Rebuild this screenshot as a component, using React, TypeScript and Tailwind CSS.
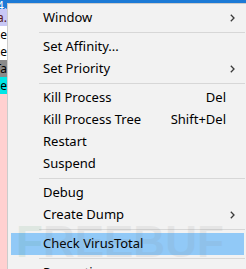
import React from "react";

const rows = [
  { bg: "bg-[#1c7ad6]", h: "h-[9px]", text: "4.", color: "text-white", align: "items-start" },
  { bg: "bg-[#c8c8f6]", h: "h-[17px]", text: "a.", color: "text-[#5a1a1a]", align: "items-center" },
  { bg: "bg-white", h: "h-[17px]", text: "ce", color: "text-black", align: "items-center" },
  { bg: "bg-white", h: "h-[17px]", text: "ce", color: "text-black", align: "items-center" },
  { bg: "bg-[#8a8a8a]", h: "h-[17px]", text: "Ta", color: "text-black", align: "items-center" },
  { bg: "bg-[#00e6e6]", h: "h-[17px]", text: "ce", color: "text-black", align: "items-center" },
];

function Chevron() {
  return (
    <svg width="5" height="8" viewBox="0 0 5 8" className="block">
      <path d="M0.8 0.8 L4 4 L0.8 7.2" fill="none" stroke="#3a3a3a" strokeWidth="1.3" />
    </svg>
  );
}

type Item = { label: string; shortcut?: string; sub?: boolean; active?: boolean } | "sep";

const items: Item[] = [
  { label: "Window", sub: true },
  "sep",
  { label: "Set Affinity..." },
  { label: "Set Priority", sub: true },
  "sep",
  { label: "Kill Process", shortcut: "Del" },
  { label: "Kill Process Tree", shortcut: "Shift+Del" },
  { label: "Restart" },
  { label: "Suspend" },
  "sep",
  { label: "Debug" },
  { label: "Create Dump", sub: true },
  "sep",
  { label: "Check VirusTotal", active: true },
  "sep",
  { label: "Properties" },
];

export default function App() {
  return (
    <div
      className="relative w-[246px] h-[269px] overflow-hidden bg-[#ffd0d0]"
      style={{ fontFamily: '"Noto Sans", "Liberation Sans", sans-serif' }}
    >
      {/* background process list */}
      <div className="flex flex-col w-full">
        {rows.map((r, i) => (
          <div key={i} className={`flex ${r.h} ${r.bg} ${r.align}`}>
            <div className={`w-[7px] overflow-hidden flex justify-end whitespace-nowrap text-[12px] leading-[12px] ${r.color}`}>
              {r.text}
            </div>
            <div className="flex-1" />
          </div>
        ))}
      </div>

      {/* context menu */}
      <div className="absolute left-[7px] top-[3px] right-0 bottom-0 bg-[#f2f2f2] border-l border-t border-[#cccccc] pt-[3px] flex flex-col text-[13px] text-[#000]">
        {items.map((it, i) =>
          it === "sep" ? (
            <div key={i} className="h-[7px] shrink-0 flex items-center pl-[31px] pr-[1px]">
              <div className="h-px w-full bg-[#d7d7d7]" />
            </div>
          ) : (
            <div
              key={i}
              className={`h-[22px] shrink-0 ml-[3px] mr-[2px] flex items-center pl-[32px] pr-[9px] ${
                it.active ? "bg-[#91c9f7]" : ""
              }`}
            >
              <span className="flex-1 whitespace-nowrap">{it.label}</span>
              {it.shortcut && <span className="mr-[9px] whitespace-nowrap">{it.shortcut}</span>}
              {it.sub && <Chevron />}
              {!it.sub && !it.shortcut && <span className="w-[5px]" />}
            </div>
          )
        )}
      </div>

      {/* watermark */}
      <div
        className="absolute left-[16px] top-[216px] pointer-events-none whitespace-nowrap font-bold text-[44px] leading-[52px] text-[#808080] opacity-[0.1]"
        style={{ fontFamily: '"Liberation Sans", sans-serif' }}
      >
        <span className="text-[#3c8a5a]">F</span>REEBUF
      </div>
    </div>
  );
}
